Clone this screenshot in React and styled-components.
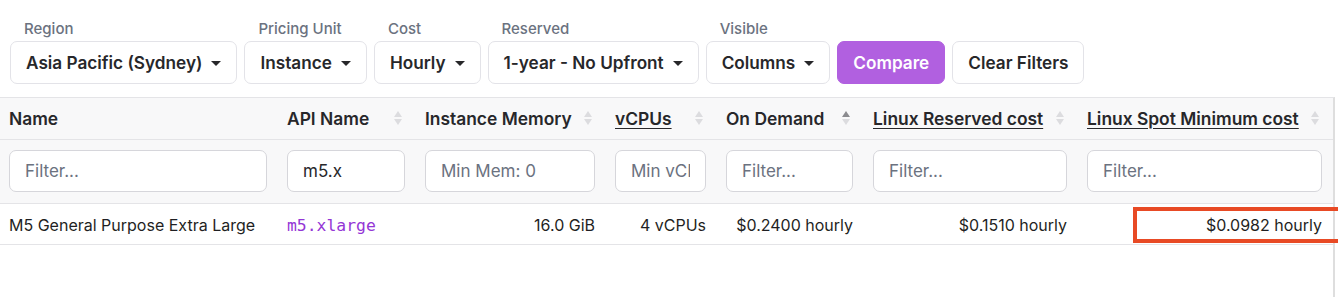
import React from "react";
import styled, { createGlobalStyle } from "styled-components";

const GlobalStyle = createGlobalStyle`
  html, body { margin: 0; padding: 0; background: #ffffff; }
  body { font-family: Inter, "Noto Sans", "Liberation Sans", sans-serif; color: #27272a; }
  * { box-sizing: border-box; }
`;

const Page = styled.div`
  width: 1338px;
  height: 298px;
  overflow: hidden;
  background: #fff;
`;

const Toolbar = styled.div`
  display: flex;
  align-items: flex-end;
  gap: 7px;
  padding: 18px 10px 0;
`;

const Group = styled.div`
  display: flex;
  flex-direction: column;
`;

const GroupLabel = styled.div`
  font-size: 15px;
  line-height: 21px;
  font-weight: 500;
  color: #6b7280;
  padding-left: 14px;
  margin-bottom: 2px;
`;

const Button = styled.button`
  height: 43px;
  display: flex;
  align-items: center;
  gap: 9px;
  padding: 0 15px;
  border-radius: 7px;
  border: 1px solid ${(p) => (p.$primary ? "#b160e0" : "#e3e3e8")};
  background: ${(p) => (p.$primary ? "#b160e0" : "#ffffff")};
  color: ${(p) => (p.$primary ? "#ffffff" : "#27272a")};
  font-family: inherit;
  font-size: 17.2px;
  font-weight: 600;
  white-space: nowrap;
  cursor: pointer;
`;

const Caret = styled.span`
  width: 0;
  height: 0;
  border-left: 5px solid transparent;
  border-right: 5px solid transparent;
  border-top: 5px solid #27272a;
  margin-top: 1px;
`;

const TableWrap = styled.div`
  margin-top: 13px;
  width: 1335px;
  border-top: 1px solid #e4e4e7;
  border-right: 2px solid #dedede;
  height: 200px;
`;

const Table = styled.table`
  width: 1333px;
  border-collapse: collapse;
  table-layout: fixed;
`;

const HeadCell = styled.th`
  height: 41px;
  padding: 0 14px 0 9px;
  background: #f8f8f9;
  border-bottom: 1px solid #e4e4e7;
  text-align: left;
  font-size: 17.4px;
  font-weight: 600;
  color: #27272a;
  white-space: nowrap;
`;

const HeadInner = styled.div`
  display: flex;
  align-items: center;
  justify-content: space-between;
`;

const HeadText = styled.span`
  text-decoration: ${(p) => (p.$underline ? "underline" : "none")};
  text-underline-offset: 3px;
  text-decoration-thickness: 1px;
`;

const SortBox = styled.span`
  display: flex;
  flex-direction: column;
  gap: 2px;
  align-items: center;
`;

const ArrowUp = styled.span`
  width: 0;
  height: 0;
  border-left: 4px solid transparent;
  border-right: 4px solid transparent;
  border-bottom: 6px solid ${(p) => (p.$active ? "#8b8b8f" : "#dcdcdf")};
`;

const ArrowDown = styled.span`
  width: 0;
  height: 0;
  border-left: 4px solid transparent;
  border-right: 4px solid transparent;
  border-top: 6px solid #dcdcdf;
`;

const FilterCell = styled.td`
  padding: 10px 11px 11px 9px;
  background: #f8f8f9;
  border-bottom: 1px solid #e4e4e7;
`;

const FilterInput = styled.input`
  width: 100%;
  height: 42px;
  padding: 0 15px;
  border: 1px solid #d6d6db;
  border-radius: 7px;
  background: #fff;
  font-family: inherit;
  font-size: 17px;
  color: #27272a;
  outline: none;
  &::placeholder { color: #6b7280; }
`;

const BodyCell = styled.td`
  position: relative;
  height: 41px;
  padding: 2px 11px 0 9px;
  border-bottom: 1px solid #e4e4e7;
  font-size: 16px;
  color: #1f1f23;
  white-space: nowrap;
  text-align: ${(p) => (p.$right ? "right" : "left")};
`;

const Mono = styled.span`
  font-family: "DejaVu Sans Mono", "Liberation Mono", monospace;
  font-size: 16.4px;
  color: #9436d6;
`;

const Highlight = styled.div`
  position: absolute;
  left: 55px;
  top: 3px;
  right: -9px;
  bottom: 1px;
  border: 4px solid #e84a25;
  pointer-events: none;
`;

const filters = [
  { label: "Region", value: "Asia Pacific (Sydney)" },
  { label: "Pricing Unit", value: "Instance" },
  { label: "Cost", value: "Hourly" },
  { label: "Reserved", value: "1-year - No Upfront" },
  { label: "Visible", value: "Columns" },
];

const columns = [
  { name: "Name", width: 278, sort: false, placeholder: "Filter..." },
  { name: "API Name", width: 138, sort: true, value: "m5.x" },
  { name: "Instance Memory", width: 190, sort: true, placeholder: "Min Mem: 0" },
  { name: "vCPUs", width: 111, sort: true, underline: true, placeholder: "Min vCPUs: 0" },
  { name: "On Demand", width: 147, sort: true, active: true, placeholder: "Filter..." },
  { name: "Linux Reserved cost", width: 214, sort: true, underline: true, placeholder: "Filter..." },
  { name: "Linux Spot Minimum cost", width: 255, sort: true, underline: true, placeholder: "Filter..." },
];

export default function App() {
  return (
    <Page>
      <GlobalStyle />
      <Toolbar>
        {filters.map((f) => (
          <Group key={f.label}>
            <GroupLabel>{f.label}</GroupLabel>
            <Button>
              {f.value}
              <Caret />
            </Button>
          </Group>
        ))}
        <Button $primary>Compare</Button>
        <Button>Clear Filters</Button>
      </Toolbar>
      <TableWrap>
        <Table>
          <colgroup>
            {columns.map((c) => (
              <col key={c.name} style={{ width: c.width }} />
            ))}
          </colgroup>
          <thead>
            <tr>
              {columns.map((c) => (
                <HeadCell key={c.name}>
                  <HeadInner>
                    <HeadText $underline={c.underline}>{c.name}</HeadText>
                    {c.sort && (
                      <SortBox>
                        <ArrowUp $active={c.active} />
                        <ArrowDown />
                      </SortBox>
                    )}
                  </HeadInner>
                </HeadCell>
              ))}
            </tr>
            <tr>
              {columns.map((c) => (
                <FilterCell key={c.name}>
                  <FilterInput
                    placeholder={c.placeholder}
                    defaultValue={c.value}
                  />
                </FilterCell>
              ))}
            </tr>
          </thead>
          <tbody>
            <tr>
              <BodyCell>M5 General Purpose Extra Large</BodyCell>
              <BodyCell>
                <Mono>m5.xlarge</Mono>
              </BodyCell>
              <BodyCell $right>16.0 GiB</BodyCell>
              <BodyCell $right>4 vCPUs</BodyCell>
              <BodyCell $right>$0.2400 hourly</BodyCell>
              <BodyCell $right>$0.1510 hourly</BodyCell>
              <BodyCell $right>
                $0.0982 hourly
                <Highlight />
              </BodyCell>
            </tr>
          </tbody>
        </Table>
      </TableWrap>
    </Page>
  );
}
